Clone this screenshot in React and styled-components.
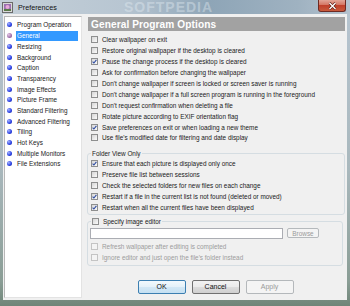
import React from 'react';
import styled, { createGlobalStyle } from 'styled-components';

const GlobalStyle = createGlobalStyle`
  html, body {
    margin: 0;
    padding: 0;
    background: #b3c2cd;
  }
  * {
    box-sizing: border-box;
  }
`;

const treeItems = [
  'Program Operation',
  'General',
  'Resizing',
  'Background',
  'Caption',
  'Transparency',
  'Image Effects',
  'Picture Frame',
  'Standard Filtering',
  'Advanced Filtering',
  'Tiling',
  'Hot Keys',
  'Multiple Monitors',
  'File Extensions',
];

const generalOptions = [
  { label: 'Clear wallpaper on exit' },
  { label: 'Restore original wallpaper if the desktop is cleared' },
  { label: 'Pause the change process if the desktop is cleared', checked: true },
  { label: 'Ask for confirmation before changing the wallpaper' },
  { label: "Don't change wallpaper if screen is locked or screen saver is running" },
  { label: "Don't change wallpaper if a full screen program is running in the foreground" },
  { label: "Don't request confirmation when deleting a file" },
  { label: 'Rotate picture according to EXIF orientation flag' },
  { label: 'Save preferences on exit or when loading a new theme', checked: true },
  { label: "Use file's modified date for filtering and date display" },
];

const folderOptions = [
  { label: 'Ensure that each picture is displayed only once', checked: true },
  { label: 'Preserve file list between sessions' },
  { label: 'Check the selected folders for new files on each change' },
  { label: 'Restart if a file in the current list is not found (deleted or moved)', checked: true },
  { label: 'Restart when all the current files have been displayed', checked: true },
];

export default function App() {
  return (
    <>
      <GlobalStyle />
      <Window>
        <TitleBar>
          <AppIcon viewBox="0 0 11 11">
            <rect x="0.5" y="0.5" width="10" height="10" fill="#d9d9d9" stroke="#6b6b6b" />
            <rect x="2" y="2" width="7" height="7" fill="#9b6fb0" />
            <circle cx="5.5" cy="5" r="2" fill="#e9a9d8" />
            <rect x="2" y="7" width="7" height="2" fill="#5a7a4a" />
          </AppIcon>
          <Title>Preferences</Title>
          <Watermark>SOFTPEDIA</Watermark>
          <CloseButton>
            <svg width="9" height="8" viewBox="0 0 9 8">
              <path d="M1.5 1 L7.5 7 M7.5 1 L1.5 7" stroke="#5a1a12" strokeWidth="2.6" />
              <path d="M1.5 1 L7.5 7 M7.5 1 L1.5 7" stroke="#fff" strokeWidth="1.4" />
            </svg>
          </CloseButton>
        </TitleBar>
        <Client>
          <Sidebar>
            {treeItems.map((item) => (
              <TreeItem key={item}>
                <Bullet selected={item === 'General'} />
                <TreeLabel selected={item === 'General'}>{item}</TreeLabel>
              </TreeItem>
            ))}
          </Sidebar>
          <Main>
            <Header>General Program Options</Header>
            <OptionList>
              {generalOptions.map((o) => (
                <Option key={o.label} {...o} />
              ))}
            </OptionList>
            <Group>
              <Legend>Folder View Only</Legend>
              {folderOptions.map((o) => (
                <Option key={o.label} {...o} />
              ))}
            </Group>
            <Group editor>
              <Legend>
                <Option label="Specify image editor" />
              </Legend>
              <EditorRow>
                <TextField />
                <SmallButton disabled>Browse</SmallButton>
              </EditorRow>
              <Option label="Refresh wallpaper after editing is completed" disabled />
              <Option label="Ignore editor and just open the file's folder instead" disabled />
            </Group>
            <ButtonRow>
              <DialogButton variant="default">OK</DialogButton>
              <DialogButton>Cancel</DialogButton>
              <DialogButton variant="disabled">Apply</DialogButton>
            </ButtonRow>
          </Main>
        </Client>
      </Window>
    </>
  );
}

const Option = ({ label, checked, disabled }) => (
  <Row disabled={disabled}>
    <Box checked={checked} disabled={disabled}>
      {checked ? (
        <svg width="5" height="5" viewBox="0 0 5 5">
          <path d="M0.6 2.6 L1.9 4 L4.4 0.8" fill="none" stroke="#2c4aa0" strokeWidth="1.1" />
        </svg>
      ) : null}
    </Box>
    <span>{label}</span>
  </Row>
);

const Window = styled.div`
  width: 350px;
  height: 306px;
  display: flex;
  flex-direction: column;
  background: linear-gradient(180deg, #b7c5d1 0%, #a9b8bd 55%, #8a9d95 92%, #6f8578 100%);
  font-family: "Liberation Sans", Arial, sans-serif;
  font-size: 6.4px;
  color: #1a1a1a;
  overflow: hidden;
`;

const TitleBar = styled.div`
  position: relative;
  height: 14px;
  flex: none;
  display: flex;
  align-items: center;
  padding-left: 2px;
  overflow: hidden;
  background: linear-gradient(90deg, #c4cfd8 0%, #b8c6d2 35%, #8ea5b7 60%, #9fb2c1 85%, #b5c3cf 100%);
`;

const AppIcon = styled.svg`
  width: 11px;
  height: 11px;
  flex: none;
`;

const Title = styled.span`
  margin-left: 5px;
  font-size: 7.2px;
  color: #111;
`;

const Watermark = styled.span`
  position: absolute;
  left: 124px;
  top: 0;
  height: 14px;
  line-height: 14px;
  font-weight: bold;
  font-size: 14px;
  letter-spacing: 1px;
  color: rgba(232, 240, 246, 0.4);
  pointer-events: none;
`;

const CloseButton = styled.div`
  position: absolute;
  right: 4px;
  top: 0;
  width: 28px;
  height: 12px;
  display: flex;
  align-items: center;
  justify-content: center;
  border: 1px solid #6e2a22;
  border-top: none;
  border-radius: 0 0 3px 3px;
  background: linear-gradient(180deg, #e2a597 0%, #d47562 45%, #c0402b 50%, #c85a3c 100%);
`;

const Client = styled.div`
  flex: 1;
  display: flex;
  margin: 0 3px 6px 3px;
  padding: 2px 2px 2px 1px;
  background: #f0f0f0;
`;

const Sidebar = styled.div`
  width: 78px;
  flex: none;
  background: #fff;
  border: 1px solid #b7b7b7;
  border-right-color: #e3e3e3;
  border-bottom-color: #e3e3e3;
  padding: 2.6px 0 0 1px;
`;

const TreeItem = styled.div`
  display: flex;
  align-items: center;
  height: 10.7px;
`;

const Bullet = styled.span`
  width: 5px;
  height: 5px;
  margin-left: 1px;
  margin-right: 4px;
  border-radius: 50%;
  flex: none;
  background: ${(p) =>
    p.selected
      ? 'radial-gradient(circle at 35% 35%, #e6cbe6 0%, #a677b0 55%, #6a3f78 100%)'
      : 'radial-gradient(circle at 35% 35%, #a9b8ff 0%, #2f44e6 55%, #1a2499 100%)'};
`;

const TreeLabel = styled.span`
  flex: 1;
  margin-right: 3px;
  padding: 1.4px 1px;
  white-space: nowrap;
  color: ${(p) => (p.selected ? '#fff' : '#1a1a1a')};
  background: ${(p) => (p.selected ? '#3399ff' : 'transparent')};
`;

const Main = styled.div`
  flex: 1;
  margin-left: 4px;
  padding: 1px 0 0 2px;
  display: flex;
  flex-direction: column;
`;

const Header = styled.div`
  height: 14px;
  display: flex;
  align-items: center;
  padding-left: 3px;
  background: #a2a2a2;
  color: #fff;
  font-weight: bold;
  font-size: 10.1px;
  letter-spacing: 0.1px;
  white-space: nowrap;
`;

const OptionList = styled.div`
  margin-top: 3.5px;
  padding-left: 3px;
`;

const Row = styled.div`
  display: flex;
  align-items: center;
  height: 10.9px;
  gap: 4px;
  white-space: nowrap;
  color: ${(p) => (p.disabled ? '#9c9c9c' : '#1a1a1a')};
`;

const Box = styled.span`
  width: 7px;
  height: 7px;
  flex: none;
  display: flex;
  align-items: center;
  justify-content: center;
  border: 1px solid ${(p) => (p.disabled ? '#c4c4c4' : '#8e8f8f')};
  background: ${(p) =>
    p.disabled
      ? '#f4f4f4'
      : 'linear-gradient(135deg, #d6d6d6 0%, #ececec 60%, #fbfbfb 100%)'};
`;

const Group = styled.fieldset`
  margin: ${(p) => (p.editor ? '2px 2px 0 -1px' : '6px 0 0 -1px')};
  padding: 0 0 ${(p) => (p.editor ? '2px' : '1px')} 3px;
  border: 1px solid #d5dde2;
  border-radius: 3px;
  min-width: 0;
`;

const Legend = styled.legend`
  margin-left: 0;
  padding: 0 1px;
  height: 9px;
  display: flex;
  align-items: center;
  color: #1a1a1a;
`;

const EditorRow = styled.div`
  display: flex;
  align-items: center;
  gap: 4px;
  margin: 2px 0 2px -1px;
`;

const TextField = styled.div`
  width: 193px;
  height: 11px;
  background: #fff;
  border: 1px solid #abadb3;
`;

const SmallButton = styled.div`
  width: 32px;
  height: 10px;
  display: flex;
  align-items: center;
  justify-content: center;
  border: 1px solid #b5b9bc;
  border-radius: 2px;
  background: #f4f4f4;
  color: #9a9a9a;
`;

const ButtonRow = styled.div`
  display: flex;
  justify-content: center;
  gap: 6px;
  margin-top: 14px;
  padding-right: 2px;
`;

const buttonLook = {
  default: {
    border: '#3c7fb1',
    bg: 'linear-gradient(180deg, #f2f9fd 0%, #e4f1f9 50%, #d3e8f5 50%, #c4e0f2 100%)',
    color: '#111',
  },
  normal: {
    border: '#707070',
    bg: 'linear-gradient(180deg, #f2f2f2 0%, #ebebeb 50%, #dddddd 50%, #cfcfcf 100%)',
    color: '#111',
  },
  disabled: {
    border: '#b4b8bb',
    bg: '#f4f4f4',
    color: '#9a9a9a',
  },
};

const DialogButton = styled.div`
  width: 48px;
  height: 14px;
  display: flex;
  align-items: center;
  justify-content: center;
  font-size: 7px;
  border-radius: 2px;
  border: 1px solid ${(p) => buttonLook[p.variant || 'normal'].border};
  background: ${(p) => buttonLook[p.variant || 'normal'].bg};
  color: ${(p) => buttonLook[p.variant || 'normal'].color};
`;
